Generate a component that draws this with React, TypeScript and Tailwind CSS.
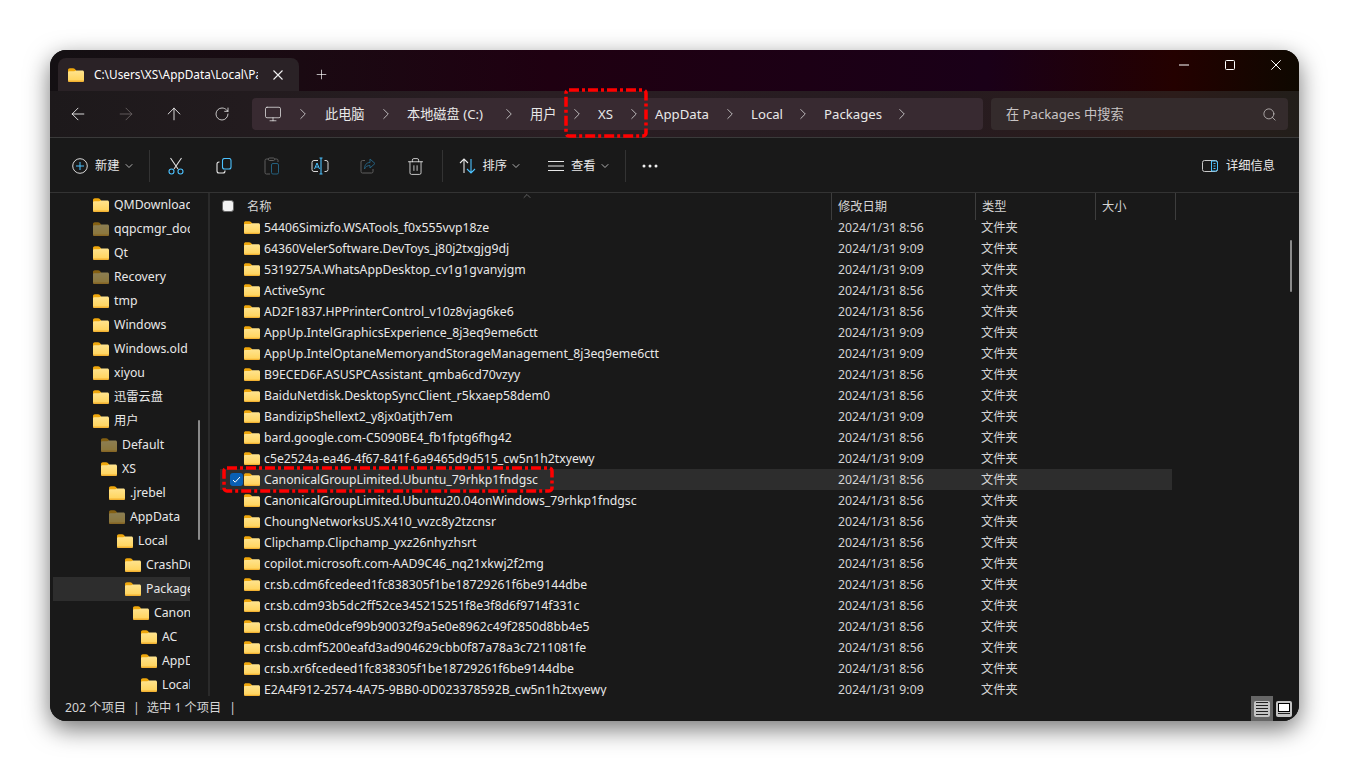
import React from 'react';
import { ArrowLeft, ArrowRight, ArrowUp, RotateCw, ChevronRight, ChevronDown, ChevronUp, Plus, Search, Monitor, Trash2 } from 'lucide-react';

const BLUE = '#4cc2ff';

const Folder = ({ dim = false, short = false }: { dim?: boolean; short?: boolean }) => (
    <svg width="16" height={short ? 13 : 14} viewBox="0 0 16 14" preserveAspectRatio="none" className={`shrink-0 ${dim ? 'opacity-50' : ''}`}>
        <defs>
            <linearGradient id="folderBody" x1="0" y1="0" x2="0" y2="1">
                <stop offset="0" stopColor="#ffe48f" />
                <stop offset="1" stopColor="#ffd258" />
            </linearGradient>
        </defs>
        <path d="M0 2C0 .9.800.200 1.800.200h3.400c.6 0 1 .2 1.400.6L8 2.200v2.500H0z" fill="#efa70c" />
        <path d="M0 4.600c0-.7.500-1.300 1.200-1.300h5L8 2.400h6.400c.9 0 1.600.7 1.600 1.600v8.400c0 .9-.7 1.500-1.600 1.500H1.600C.7 13.900 0 13.300 0 12.400z" fill="url(#folderBody)" />
        <path d="M0 12.600v.1c0 .7.700 1.200 1.600 1.200h12.800c.9 0 1.600-.5 1.600-1.200v-.1z" fill="#f3b232" />
    </svg>
);

const crumbs: [string, string][] = [
    ['此电脑', 'w-[40px]'],
    ['本地磁盘 (C:)', 'w-[81px]'],
    ['用户', 'w-[26px]'],
    ['XS', 'w-[15px]'],
    ['AppData', 'w-[54px]'],
    ['Local', 'w-[31px]'],
    ['Packages', 'w-[57px]'],
];

const navTree: [string, number, boolean?, boolean?][] = [
    ['QMDownload', 0],
    ['qqpcmgr_docpro', 0, true],
    ['Qt', 0],
    ['Recovery', 0, true],
    ['tmp', 0],
    ['Windows', 0],
    ['Windows.old', 0],
    ['xiyou', 0],
    ['迅雷云盘', 0],
    ['用户', 0],
    ['Default', 1, true],
    ['XS', 1],
    ['.jrebel', 2],
    ['AppData', 2, true],
    ['Local', 3],
    ['CrashDumps', 4],
    ['Packages', 4, false, true],
    ['CanonicalGroupLimited', 5],
    ['AC', 6],
    ['AppData', 6],
    ['LocalCache', 6],
];

const indents = ['pl-[43px]', 'pl-[51px]', 'pl-[59px]', 'pl-[67px]', 'pl-[75px]', 'pl-[83px]', 'pl-[91px]'];

const files: [string, string][] = [
    ['54406Simizfo.WSATools_f0x555vvp18ze', '8:56'],
    ['64360VelerSoftware.DevToys_j80j2txgjg9dj', '9:09'],
    ['5319275A.WhatsAppDesktop_cv1g1gvanyjgm', '9:09'],
    ['ActiveSync', '8:56'],
    ['AD2F1837.HPPrinterControl_v10z8vjag6ke6', '8:56'],
    ['AppUp.IntelGraphicsExperience_8j3eq9eme6ctt', '9:09'],
    ['AppUp.IntelOptaneMemoryandStorageManagement_8j3eq9eme6ctt', '9:09'],
    ['B9ECED6F.ASUSPCAssistant_qmba6cd70vzyy', '8:56'],
    ['BaiduNetdisk.DesktopSyncClient_r5kxaep58dem0', '8:56'],
    ['BandizipShellext2_y8jx0atjth7em', '9:09'],
    ['bard.google.com-C5090BE4_fb1fptg6fhg42', '8:56'],
    ['c5e2524a-ea46-4f67-841f-6a9465d9d515_cw5n1h2txyewy', '9:09'],
    ['CanonicalGroupLimited.Ubuntu_79rhkp1fndgsc', '8:56'],
    ['CanonicalGroupLimited.Ubuntu20.04onWindows_79rhkp1fndgsc', '8:56'],
    ['ChoungNetworksUS.X410_vvzc8y2tzcnsr', '8:56'],
    ['Clipchamp.Clipchamp_yxz26nhyzhsrt', '8:56'],
    ['copilot.microsoft.com-AAD9C46_nq21xkwj2f2mg', '8:56'],
    ['cr.sb.cdm6fcedeed1fc838305f1be18729261f6be9144dbe', '8:56'],
    ['cr.sb.cdm93b5dc2ff52ce345215251f8e3f8d6f9714f331c', '8:56'],
    ['cr.sb.cdme0dcef99b90032f9a5e0e8962c49f2850d8bb4e5', '8:56'],
    ['cr.sb.cdmf5200eafd3ad904629cbb0f87a78a3c7211081fe', '8:56'],
    ['cr.sb.xr6fcedeed1fc838305f1be18729261f6be9144dbe', '8:56'],
    ['E2A4F912-2574-4A75-9BB0-0D023378592B_cw5n1h2txyewy', '9:09'],
];

const ToolBtn = ({ children }: { children: React.ReactNode }) => (
    <div className="flex h-full w-12 items-center justify-center">{children}</div>
);

const Sep = () => <div className="h-8 w-px bg-[#333333]" />;

const RedBox = ({ className, w, h }: { className: string; w: number; h: number }) => (
    <svg width={w} height={h} className={`pointer-events-none absolute ${className}`}>
        <rect x="2" y="2" width={w - 4} height={h - 4} rx="3" fill="none" stroke="#ff0000" strokeWidth="3.500" strokeDasharray="10 3 3 3" />
    </svg>
);

export default function App() {
    return (
        <div className="h-[771px] w-[1350px] overflow-hidden bg-white pl-[50px] pt-[50px] font-['Noto_Sans','Noto_Sans_CJK_SC',sans-serif] text-[12.25px] text-[#e8e8e8]">
            <div className="relative flex h-[671px] w-[1249px] flex-col overflow-hidden rounded-[16px] bg-[#191919] shadow-[0_8px_24px_rgba(0,0,0,0.55)]">
                {/* Title bar */}
                <div className="flex h-[41px] shrink-0 items-end bg-[linear-gradient(90deg,#141013_0%,#1a0a12_20%,#1f0011_40%,#1a0018_75%,#240100_90%,#0e0800_100%)] pl-2">
                    <div className="flex h-[33px] w-[241px] items-center rounded-t-lg bg-[#2a2226] pl-[10px]">
                        <Folder />
                        <span className="ml-[10px] w-[164px] overflow-hidden whitespace-nowrap text-[11.800px] text-white">C:\Users\XS\AppData\Local\Packages</span>
                        <svg width="10" height="10" viewBox="0 0 10 10" fill="none" className="ml-[15px]"><path d="M.500.500l9 9M9.500.500l-9 9" stroke="#f0f0f0" strokeWidth="1.100" /></svg>
                    </div>
                    <Plus size={15} strokeWidth={1.1} className="mb-[9px] ml-[15px] text-white" />
                    <div className="mb-[21px] ml-auto flex items-center">
                        <div className="flex w-[46px] justify-center"><svg width="10" height="10" viewBox="0 0 10 10" fill="none"><path d="M0 5h10" stroke="#ffffff" /></svg></div>
                        <div className="flex w-[46px] justify-center"><svg width="10" height="10" viewBox="0 0 10 10" fill="none"><rect x=".500" y=".500" width="9" height="9" rx="1" stroke="#ffffff" /></svg></div>
                        <div className="flex w-[46px] justify-center"><svg width="10" height="10" viewBox="0 0 10 10" fill="none"><path d="M.300.300l9.400 9.400M9.700.300L.300 9.700" stroke="#ffffff" /></svg></div>
                    </div>
                </div>

                {/* Address row */}
                <div className="flex h-[47px] shrink-0 items-center border-b border-[#3a3a3a] bg-[linear-gradient(90deg,#1d191b_0%,#2a1e23_40%,#261b20_70%,#2c1c1a_90%,#221e1a_100%)] pl-1">
                    <div className="flex w-[192px] shrink-0 text-white">
                        <div className="flex w-12 justify-center"><ArrowLeft size={20} strokeWidth={1} /></div>
                        <div className="flex w-12 justify-center text-[#6d6668]"><ArrowRight size={20} strokeWidth={1} /></div>
                        <div className="flex w-12 justify-center"><ArrowUp size={20} strokeWidth={1} /></div>
                        <div className="flex w-12 items-center justify-center"><RotateCw size={16} strokeWidth={1.100} /></div>
                    </div>
                    <div className="ml-[6px] flex h-8 w-[731px] shrink-0 items-center rounded bg-[#382a31] pl-[12px] text-[13.200px]">
                        <Monitor size={18} strokeWidth={1} className="mr-[12px]" />
                        <ChevronRight size={18} strokeWidth={1} className="mr-[13px]" />
                        {crumbs.map(([c, w]) => (
                            <React.Fragment key={c}>
                                <span className={`whitespace-nowrap pt-[2px] ${w}`}>{c}</span>
                                <ChevronRight size={18} strokeWidth={1} className="mx-[12px]" />
                            </React.Fragment>
                        ))}
                    </div>
                    <div className="ml-2 flex h-8 w-[297px] shrink-0 items-center justify-between rounded bg-[#342b2c] pl-[15px] pr-[11px] text-[13.200px] text-[#c8c4c4]">
                        <span className="pt-[2px]">在 Packages 中搜索</span>
                        <Search size={15} strokeWidth={1.250} />
                    </div>
                </div>

                {/* Command bar */}
                <div className="flex h-[55px] shrink-0 items-center border-b border-[#333333] pl-[22px] pt-[2px]">
                    <svg width="16" height="16" viewBox="0 0 16 16" fill="none" className="shrink-0">
                        <circle cx="8" cy="8" r="7.300" stroke="#d8d8d8" />
                        <path d="M8 4v8M4 8h8" stroke={BLUE} />
                    </svg>
                    <span className="ml-[7px] whitespace-nowrap">新建</span>
                    <ChevronDown size={12} className="ml-[3px] text-[#b0b0b0]" />
                    <div className="ml-[14px]"><Sep /></div>
                    <div className="ml-[2px] flex h-full items-center">
                        <ToolBtn>
                            <svg width="16" height="18" viewBox="0 0 16 18" fill="none">
                                <path d="M2.500 1l7.500 11M13.500 1L6 12" stroke="#e0e0e0" strokeWidth="1.100" />
                                <circle cx="3.500" cy="14.500" r="2.500" stroke={BLUE} strokeWidth="1.100" />
                                <circle cx="12.500" cy="14.500" r="2.500" stroke={BLUE} strokeWidth="1.100" />
                            </svg>
                        </ToolBtn>
                        <ToolBtn>
                            <svg width="16" height="16" viewBox="0 0 16 16" fill="none">
                                <rect x="6.500" y="0.500" width="8.500" height="10.500" rx="2" stroke={BLUE} strokeWidth="1.100" />
                                <path d="M3.500 4H3a2 2 0 0 0-2 2v7a2 2 0 0 0 2 2h4a2 2 0 0 0 2-2v-.5" stroke="#e8e8e8" strokeWidth="1.100" />
                            </svg>
                        </ToolBtn>
                        <ToolBtn>
                            <svg width="16" height="18" viewBox="0 0 16 18" fill="none">
                                <path d="M5 2H2.500a1.500 1.500 0 0 0-1.500 1.500v12A1.500 1.500 0 0 0 2.500 17H6M11 2h1.500A1.500 1.500 0 0 1 14 3.500V5" stroke="#5f5f5f" />
                                <rect x="4.500" y="1" width="6" height="2.500" rx="1" stroke="#5f5f5f" />
                                <rect x="7.500" y="6.500" width="7" height="10.500" rx="1.500" stroke="#24607f" />
                            </svg>
                        </ToolBtn>
                        <ToolBtn>
                            <svg width="18" height="18" viewBox="0 0 18 18" fill="none">
                                <path d="M7 3.500H3a2 2 0 0 0-2 2v7a2 2 0 0 0 2 2h4M13.500 3.500H15a2 2 0 0 1 2 2v7a2 2 0 0 1-2 2h-1.500" stroke="#d8d8d8" />
                                <path d="M8.500 1h3M10 1v16M8.500 17h3" stroke={BLUE} strokeWidth="1.100" />
                                <path d="M3.500 12L6 6l2.500 6M4.500 10h3" stroke={BLUE} />
                            </svg>
                        </ToolBtn>
                        <ToolBtn>
                            <svg width="16" height="16" viewBox="0 0 16 16" fill="none">
                                <path d="M5 2.500H2.500A1.500 1.500 0 0 0 1 4v9.500A1.500 1.500 0 0 0 2.500 15h9a1.500 1.500 0 0 0 1.500-1.500V11" stroke="#5f5f5f" />
                                <path d="M10 1l5 4.500L10 10V7.500C7.500 7.500 5.500 8.500 4.500 11c0-4 2-6.500 5.500-6.500z" stroke="#24607f" />
                            </svg>
                        </ToolBtn>
                        <ToolBtn><Trash2 size={19} strokeWidth={1} color="#f0f0f0" /></ToolBtn>
                    </div>
                    <div className="ml-[2px]"><Sep /></div>
                    <svg width="17" height="16" viewBox="0 0 17 16" fill="none" className="ml-[16px] shrink-0">
                        <path d="M5 15V1M1 5l4-4 4 4" stroke="#e8e8e8" strokeWidth="1.100" />
                        <path d="M12 1v14M8 11l4 4 4-4" stroke={BLUE} strokeWidth="1.100" />
                    </svg>
                    <span className="ml-[7px] whitespace-nowrap">排序</span>
                    <ChevronDown size={12} className="ml-[3px] text-[#b0b0b0]" />
                    <svg width="16" height="12" viewBox="0 0 16 12" fill="none" className="ml-[26px] shrink-0">
                        <path d="M0 1.500h16M0 6h16M0 10.500h16" stroke="#e8e8e8" />
                    </svg>
                    <span className="ml-[7px] whitespace-nowrap">查看</span>
                    <ChevronDown size={12} className="ml-[3px] text-[#b0b0b0]" />
                    <div className="ml-[14px]"><Sep /></div>
                    <svg width="16" height="4" viewBox="0 0 16 4" className="ml-[16px] shrink-0">
                        <circle cx="2" cy="2" r="1.500" fill="#f0f0f0" />
                        <circle cx="8" cy="2" r="1.500" fill="#f0f0f0" />
                        <circle cx="14" cy="2" r="1.500" fill="#f0f0f0" />
                    </svg>
                    <div className="ml-auto flex items-center pr-[24px]">
                        <svg width="16" height="12" viewBox="0 0 16 12" fill="none">
                            <rect x="0.500" y="0.500" width="15" height="11" rx="2" stroke="#c8c8c8" />
                            <path d="M9.500 1h4a2 2 0 0 1 2 2v6a2 2 0 0 1-2 2h-4zM11.500 3.500h2M11.500 6h2M11.500 8.500h2" stroke={BLUE} />
                        </svg>
                        <span className="ml-2 whitespace-nowrap">详细信息</span>
                    </div>
                </div>

                {/* Body */}
                <div className="flex min-h-0 flex-1">
                    {/* Nav pane */}
                    <div className="relative flex w-[160px] shrink-0 flex-col border-r-[2px] border-[#2a2a2a]">
                        <div className="w-[140px] overflow-hidden">
                            {navTree.map(([name, depth, dim, active], i) => (
                                <div
                                    key={name + i}
                                    className={`flex h-6 items-center gap-[5px] whitespace-nowrap ${active ? 'ml-[3px] bg-[#2d2d2d] pl-[72px]' : indents[depth]}`}
                                >
                                    <Folder dim={dim} />
                                    <span>{name}</span>
                                </div>
                            ))}
                        </div>
                        <div className="absolute right-[8px] top-[227px] h-[120px] w-[2px] rounded bg-[#8a8a8a]" />
                    </div>

                    {/* File list */}
                    <div className="relative min-w-0 flex-1 overflow-hidden pl-[10px]">
                        <div className="relative flex h-6 items-start text-[#d4d4d4]">
                            <div className="ml-[2px] mt-[7px] h-3 w-3 rounded-[3px] border border-[#666666] bg-[#f2f2f2]" />
                            <span className="ml-[13px] w-[584px] leading-[27px]">名称</span>
                            <div className="h-[27px] w-[144px] border-l border-[#3d3d3d] pl-[6px] leading-[27px]">修改日期</div>
                            <div className="h-[27px] w-[120px] border-l border-[#3d3d3d] pl-[6px] leading-[27px]">类型</div>
                            <div className="h-[27px] w-[81px] border-x border-[#3d3d3d] pl-[6px] leading-[27px]">大小</div>
                            <ChevronUp size={12} strokeWidth={1} className="absolute left-[301px] top-[-3px] text-[#aaaaaa]" />
                        </div>
                        {files.map(([name, time], i) => (
                            <div key={name} className={`flex h-[21px] w-[952px] items-center ${i === 12 ? 'bg-[#2d2d2d]' : ''}`}>
                                <div className="flex w-[24px] shrink-0 justify-center pl-[8px]">
                                    {i === 12 && (
                                        <div className="flex h-[13px] w-[13px] items-center justify-center rounded-[3px] bg-[#0a5fb4]">
                                            <svg width="9" height="9" viewBox="0 0 9 9" fill="none"><path d="M1 5l2.200 2.200L8 2" stroke="#ffffff" /></svg>
                                        </div>
                                    )}
                                </div>
                                <Folder short />
                                <span className="ml-[4px] w-[574px] shrink-0 whitespace-nowrap pt-[2px]">{name}</span>
                                <span className="w-[143px] shrink-0 pt-[2px] text-[#d4d4d4]">2024/1/31 {time}</span>
                                <span className="pt-[2px] text-[#d4d4d4]">文件夹</span>
                            </div>
                        ))}
                        <div className="absolute right-[7px] top-[47px] h-[52px] w-[2px] rounded bg-[#8a8a8a]" />
                    </div>
                </div>

                {/* Status bar */}
                <div className="flex h-[25px] shrink-0 items-center bg-[#191919] pl-[15px] text-[#d6d6d6]">
                    <span>202 个项目</span>
                    <span className="ml-[7px]">|</span>
                    <span className="ml-[7px]">选中 1 个项目</span>
                    <span className="ml-[8px]">|</span>
                    <div className="ml-auto flex h-full items-center pr-[7px]">
                        <div className="flex h-full w-[22px] items-center justify-center bg-[#666666]">
                            <div className="flex h-4 w-4 flex-col justify-center gap-[2px] rounded-[2px] bg-[#c4c4c4] px-[2px]">
                                <div className="h-px bg-[#222222]" /><div className="h-px bg-[#222222]" /><div className="h-px bg-[#222222]" /><div className="h-px bg-[#222222]" /><div className="h-px bg-[#222222]" />
                            </div>
                        </div>
                        <div className="ml-[3px] flex h-4 w-4 flex-col items-center gap-px rounded-[2px] bg-[#c4c4c4] pt-[2px]">
                            <div className="h-[9px] w-3 border border-black bg-white" />
                            <div className="h-px w-3 bg-[#222222]" />
                        </div>
                    </div>
                </div>

                {/* Red annotations */}
                <RedBox className="left-[514px] top-[38px]" w={84} h={50} />
                <RedBox className="left-[172px] top-[416px]" w={332} h={27} />
            </div>
        </div>
    );
}
